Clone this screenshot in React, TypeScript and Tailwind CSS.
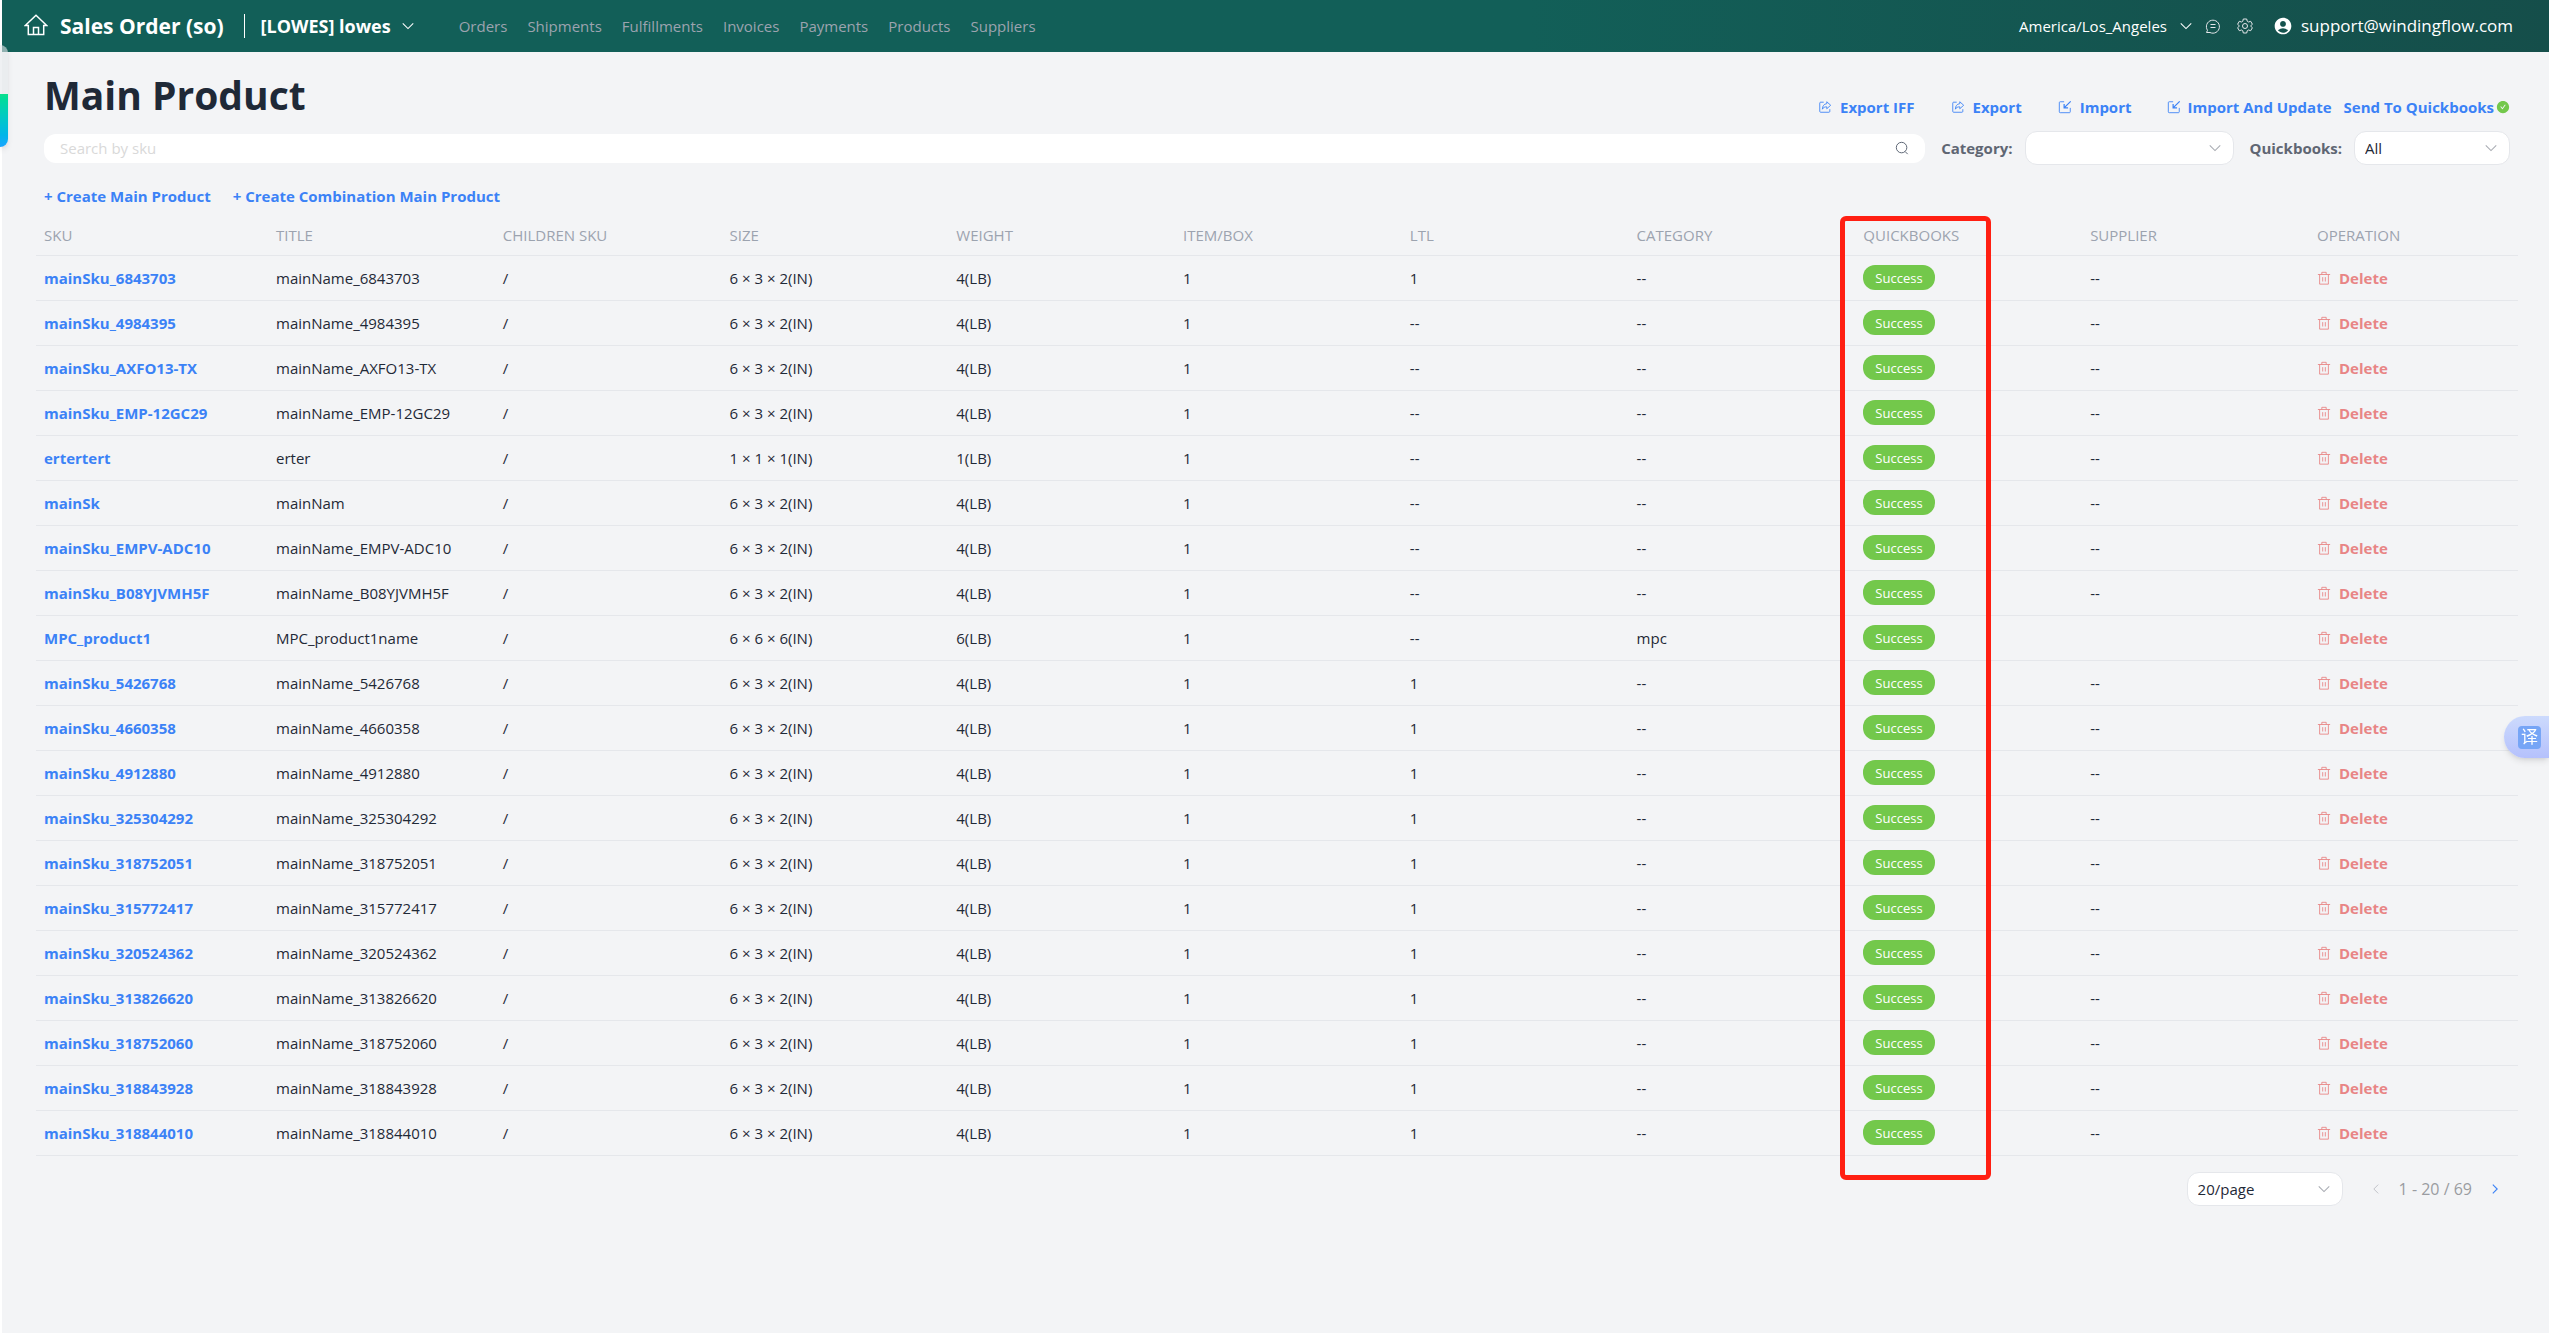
import { type ReactNode } from 'react'
import { AiFillCheckCircle } from 'react-icons/ai'
import { MdAccountCircle } from 'react-icons/md'

const FONT = "font-['Open_Sans','Noto_Sans_CJK_SC',sans-serif]"

const navItems = ['Orders', 'Shipments', 'Fulfillments', 'Invoices', 'Payments', 'Products', 'Suppliers']

const columns = [
  { label: 'SKU', width: 'w-[232px]' },
  { label: 'TITLE', width: '' },
  { label: 'CHILDREN SKU', width: '' },
  { label: 'SIZE', width: '' },
  { label: 'WEIGHT', width: '' },
  { label: 'ITEM/BOX', width: '' },
  { label: 'LTL', width: '' },
  { label: 'CATEGORY', width: '' },
  { label: 'QUICKBOOKS', width: '' },
  { label: 'SUPPLIER', width: '' },
  { label: 'OPERATION', width: 'w-[209px]' },
]

type Product = {
  sku: string
  title: string
  size?: string
  weight?: string
  ltl?: string
  category?: string
  supplier?: string
}

const products: Product[] = [
  { sku: 'mainSku_6843703', title: 'mainName_6843703', ltl: '1' },
  { sku: 'mainSku_4984395', title: 'mainName_4984395' },
  { sku: 'mainSku_AXFO13-TX', title: 'mainName_AXFO13-TX' },
  { sku: 'mainSku_EMP-12GC29', title: 'mainName_EMP-12GC29' },
  { sku: 'ertertert', title: 'erter', size: '1 × 1 × 1(IN)', weight: '1(LB)' },
  { sku: 'mainSk', title: 'mainNam' },
  { sku: 'mainSku_EMPV-ADC10', title: 'mainName_EMPV-ADC10' },
  { sku: 'mainSku_B08YJVMH5F', title: 'mainName_B08YJVMH5F' },
  { sku: 'MPC_product1', title: 'MPC_product1name', size: '6 × 6 × 6(IN)', weight: '6(LB)', category: 'mpc', supplier: '' },
  { sku: 'mainSku_5426768', title: 'mainName_5426768', ltl: '1' },
  { sku: 'mainSku_4660358', title: 'mainName_4660358', ltl: '1' },
  { sku: 'mainSku_4912880', title: 'mainName_4912880', ltl: '1' },
  { sku: 'mainSku_325304292', title: 'mainName_325304292', ltl: '1' },
  { sku: 'mainSku_318752051', title: 'mainName_318752051', ltl: '1' },
  { sku: 'mainSku_315772417', title: 'mainName_315772417', ltl: '1' },
  { sku: 'mainSku_320524362', title: 'mainName_320524362', ltl: '1' },
  { sku: 'mainSku_313826620', title: 'mainName_313826620', ltl: '1' },
  { sku: 'mainSku_318752060', title: 'mainName_318752060', ltl: '1' },
  { sku: 'mainSku_318843928', title: 'mainName_318843928', ltl: '1' },
  { sku: 'mainSku_318844010', title: 'mainName_318844010', ltl: '1' },
]

function Icon({ className, children }: { className: string; children: ReactNode }) {
  return (
    <svg className={`shrink-0 ${className}`} viewBox="0 0 16 16" fill="none" stroke="currentColor" aria-hidden="true">
      {children}
    </svg>
  )
}

function Chevron({ className }: { className: string }) {
  return (
    <Icon className={className}>
      <path d="M2 5l6 6 6-6" strokeWidth={1.2} />
    </Icon>
  )
}

function HomeIcon() {
  return (
    <svg className="h-6 w-6 shrink-0" viewBox="0 0 24 24" fill="none" stroke="currentColor" strokeWidth={1.5} aria-hidden="true">
      <path d="M12 1.200L1.300 11.500h3V20.500h15.400v-9h3zM9.500 20.500v-7h5v7" />
    </svg>
  )
}

function ExportIcon() {
  return (
    <Icon className="h-3.5 w-3.5">
      <path d="M6.500 2.500H3a1 1 0 0 0-1 1V13a1 1 0 0 0 1 1h9.500a1 1 0 0 0 1-1v-2.500" />
      <path d="M10 2l4.500 4-4.500 4V7.800c-2.500 0-4 .7-5 2.700 0-3.500 1.800-6 5-6.300z" />
    </Icon>
  )
}

function ImportIcon() {
  return (
    <Icon className="h-3.5 w-3.5">
      <path d="M7 2H2.500a1 1 0 0 0-1 1v10.500a1 1 0 0 0 1 1h10.500a1 1 0 0 0 1-1V9" />
      <path d="M14.500 1.500L7.500 8.500M7 4.500v4.500h4.500" strokeWidth={1.4} />
    </Icon>
  )
}

function TrashIcon() {
  return (
    <Icon className="h-3.5 w-3.5">
      <path d="M1 4h14M5.500 4V1.500h5V4M3 4v11h10V4M6.500 7v5M9.500 7v5" />
    </Icon>
  )
}

function Select({ id, label, className, children }: { id: string; label?: string; className: string; children?: ReactNode }) {
  return (
    <div className={`relative ${className}`}>
      <select
        id={id}
        aria-label={label}
        className="block h-[34px] w-full appearance-none rounded-xl border border-gray-200 bg-white px-2.5 text-[15px] leading-5 text-[#1f2937]"
      >
        {children}
      </select>
      <span className="pointer-events-none absolute inset-y-0 right-3 flex items-center text-[#a8abb2]">
        <Chevron className="h-3.5 w-3.5" />
      </span>
    </div>
  )
}

function Header() {
  return (
    <header className="flex h-13 items-center bg-gradient-to-r from-[#125f58] from-60% to-[#154e4a] pr-9 pl-[22px] text-white">
      <a href="#home" aria-label="Home"><HomeIcon /></a>
      <h1 className="ml-3 text-[21px] leading-8 font-bold">Sales Order (so)</h1>
      <span className="ml-5 h-6 w-px bg-white" />
      <button type="button" className="ml-4 flex items-center gap-2.5 text-[18px] leading-6 font-bold">
        [LOWES] lowes
        <Chevron className="h-3.5 w-3.5" />
      </button>
      <nav className="ml-11 flex gap-5 text-[15px] leading-6 text-[#9ca3af]">
        {navItems.map((item) => (
          <a key={item} href={`#${item.toLowerCase()}`}>{item}</a>
        ))}
      </nav>
      <div className="ml-auto flex items-center">
        <button type="button" className="flex items-center gap-3 text-[15px] leading-6">
          America/Los_Angeles
          <Chevron className="h-3.5 w-3.5" />
        </button>
        <button type="button" aria-label="Messages" className="ml-3 text-gray-200">
          <Icon className="h-4 w-4">
            <path d="M1.500 14.500l1-2.200A6.500 6.500 0 1 1 5 14.500zM5.500 6.500h5M5.500 9.500h5" />
          </Icon>
        </button>
        <button type="button" aria-label="Settings" className="ml-4 text-gray-200">
          <Icon className="h-4 w-4">
            <circle cx="8" cy="8" r="2.500" />
            <path d="M6.300 1h3.400l.5 2.200 1.300.8 2.200-.7 1.700 3-1.700 1.500v.4l1.700 1.500-1.700 3-2.200-.7-1.300.8-.5 2.200H6.300l-.5-2.200-1.300-.8-2.200.7-1.700-3 1.700-1.500v-.4L.6 6.300l1.700-3 2.200.7 1.300-.8z" />
          </Icon>
        </button>
        <a href="#account" className="ml-5 flex items-center gap-2 text-[17px] leading-6">
          <MdAccountCircle className="h-5 w-5" />
          support@windingflow.com
        </a>
      </div>
    </header>
  )
}

function Toolbar() {
  return (
    <div className="px-2">
      <div className="flex h-[79px] items-end justify-between">
        <h2 className="pb-3 text-[39px] leading-12 font-bold text-[#1f2937]">Main Product</h2>
        <div className="flex items-center pb-3 text-[15px] leading-6 font-bold text-[#3b82f6]">
          <button type="button" className="flex items-center gap-2"><ExportIcon />Export IFF</button>
          <button type="button" className="ml-9 flex items-center gap-2"><ExportIcon />Export</button>
          <button type="button" className="ml-9 flex items-center gap-2"><ImportIcon />Import</button>
          <button type="button" className="ml-9 flex items-center gap-1.5"><ImportIcon />Import And Update</button>
          <button type="button" className="ml-3 flex items-center gap-0.5">
            Send To Quickbooks
            <AiFillCheckCircle className="h-3.5 w-3.5 text-[#73c84b]" />
          </button>
        </div>
      </div>
      <div className="flex items-center">
        <div className="relative flex-1">
          <input
            aria-label="Search by sku"
            placeholder="Search by sku"
            className="block h-[29px] w-full rounded-xl bg-white px-4 text-[15px] placeholder:text-[#d9d9d9]"
          />
          <button type="button" aria-label="Search" className="absolute inset-y-0 right-4 text-gray-600">
            <Icon className="h-3.5 w-3.5">
              <path d="M13.500 7.500a6 6 0 1 1-12 0 6 6 0 0 1 12 0zM11.500 12l3 3" />
            </Icon>
          </button>
        </div>
        <label htmlFor="category" className="ml-4 text-[15px] leading-6 font-bold text-[#5f6673]">Category:</label>
        <Select id="category" className="ml-3 w-[209px]" />
        <label htmlFor="quickbooks" className="ml-4 text-[15px] leading-6 font-bold text-[#5f6673]">Quickbooks:</label>
        <Select id="quickbooks" className="ml-3 w-39">
          <option>All</option>
        </Select>
      </div>
      <div className="mt-[19px] flex gap-5.5 text-[15px] leading-6 font-bold text-[#3b82f6]">
        <button type="button">+ Create Main Product</button>
        <button type="button">+ Create Combination Main Product</button>
      </div>
    </div>
  )
}

function ProductTable() {
  return (
    <div className="relative mt-2">
      <table className="w-full table-fixed text-left text-[15px] leading-6 text-[#1f2937]">
        <thead>
          <tr className="h-[39px] border-b border-gray-200 text-[#9ca3af]">
            {columns.map((c) => (
              <th key={c.label} className={`px-2 font-normal ${c.width}`}>{c.label}</th>
            ))}
          </tr>
        </thead>
        <tbody>
          {products.map((p) => (
            <tr key={p.sku} className="h-[45px] border-b border-gray-200">
              <td className="px-2"><a href={`#${p.sku}`} className="font-bold text-[#3b82f6]">{p.sku}</a></td>
              <td className="px-2">{p.title}</td>
              <td className="px-2">/</td>
              <td className="px-2">{p.size ?? '6 × 3 × 2(IN)'}</td>
              <td className="px-2">{p.weight ?? '4(LB)'}</td>
              <td className="px-2">1</td>
              <td className="px-2">{p.ltl ?? '--'}</td>
              <td className="px-2">{p.category ?? '--'}</td>
              <td className="px-2">
                <span className="flex h-[25px] w-fit items-center rounded-xl bg-[#73c84b] px-3 text-[13px] text-white">Success</span>
              </td>
              <td className="px-2">{p.supplier ?? '--'}</td>
              <td className="px-2">
                <button type="button" className="flex items-center gap-2 font-bold text-[#e88585]">
                  <TrashIcon />
                  Delete
                </button>
              </td>
            </tr>
          ))}
        </tbody>
      </table>
      {/* highlight around the quickbooks column */}
      <div className="pointer-events-none absolute top-0 right-[527px] -bottom-6 w-[151px] rounded-md border-5 border-[#ff1f12]" />
    </div>
  )
}

function Pagination() {
  return (
    <div className="mt-4 flex items-center justify-end pr-4">
      <Select id="page-size" label="Rows per page" className="w-39">
        <option>20/page</option>
      </Select>
      <button type="button" aria-label="Previous page" className="ml-[26px] text-[#b9bcc2]">
        <Icon className="h-3.5 w-3.5"><path d="M10.500 3L5.500 8l5 5" /></Icon>
      </button>
      <span className="ml-4 text-[16px] leading-6 text-[#9a9ca1]">1 - 20 / 69</span>
      <button type="button" aria-label="Next page" className="ml-4 text-[#3b82f6]">
        <Icon className="h-3.5 w-3.5"><path d="M5.500 3l5 5-5 5" strokeWidth={1.3} /></Icon>
      </button>
    </div>
  )
}

export default function App() {
  return (
    <div className={`relative min-h-screen border-l-2 border-white bg-[#f3f4f6] ${FONT}`}>
      <Header />
      <main className="pr-[31px] pl-[34px]">
        <Toolbar />
        <ProductTable />
        <Pagination />
      </main>

      {/* docked side widgets */}
      <div className="fixed top-[45px] left-0 h-[102px] w-2 overflow-hidden rounded-r-lg bg-gray-200/60 shadow-md">
        <div className="mt-[49px] h-[53px] bg-gradient-to-b from-[#0be08c] to-[#19a5ff]" />
      </div>
      <button
        type="button"
        aria-label="Translate"
        className="fixed top-[716px] right-0 flex h-[42px] w-[45px] items-center rounded-l-full bg-gradient-to-b from-[#ccdafd] to-[#b5c1fc] pl-3.5 shadow-md"
      >
        <span className="flex h-[23px] w-[23px] items-center justify-center rounded bg-[#76a5f6] text-[17px] leading-5 text-white">译</span>
      </button>
    </div>
  )
}
